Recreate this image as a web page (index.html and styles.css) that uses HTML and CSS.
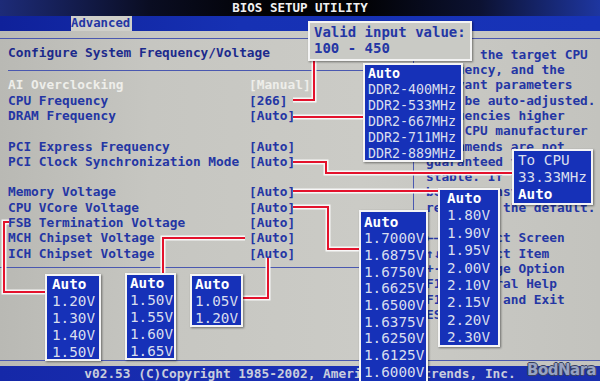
FILE: index.html
```html
<!DOCTYPE html>
<html lang="en">
<head>
<meta charset="utf-8">
<title>BIOS SETUP UTILITY</title>
<link rel="stylesheet" href="styles.css">
</head>
<body>
<div class="screen">
  <header class="title">BIOS SETUP UTILITY</header>
  <nav class="tabs"><span class="tab">Advanced</span></nav>
  <main class="main">
    <section class="left">
      <h1 class="heading">Configure System Frequency/Voltage</h1>
      <div class="rows">
        <div class="row dim"><span>AI Overclocking</span><span>[Manual]</span></div>
        <div class="row"><span>CPU Frequency</span><span>[266]</span></div>
        <div class="row"><span>DRAM Frequency</span><span>[Auto]</span></div>
        <div class="row"></div>
        <div class="row"><span>PCI Express Frequency</span><span>[Auto]</span></div>
        <div class="row"><span>PCI Clock Synchronization Mode</span><span>[Auto]</span></div>
        <div class="row"></div>
        <div class="row"><span>Memory Voltage</span><span>[Auto]</span></div>
        <div class="row"><span>CPU VCore Voltage</span><span>[Auto]</span></div>
        <div class="row"><span>FSB Termination Voltage</span><span>[Auto]</span></div>
        <div class="row"><span>MCH Chipset Voltage</span><span>[Auto]</span></div>
        <div class="row"><span>ICH Chipset Voltage</span><span>[Auto]</span></div>
      </div>
      <div class="sep"></div>
    </section>
    <aside class="help">
      <div class="hl">Select the target CPU</div>
      <div class="hl">frequency, and the</div>
      <div class="hl">relevant parameters</div>
      <div class="hl">will be auto-adjusted.</div>
      <div class="hl">Frequencies higher</div>
      <div class="hl">than CPU manufacturer</div>
      <div class="hl">recommends are not</div>
      <div class="hl">guaranteed to be</div>
      <div class="hl">stable. If the system</div>
      <div class="hl">becomes unstable,</div>
      <div class="hl">return to the default.</div>
      <div class="hl"> </div>
      <div class="hl">←→   Select Screen</div>
      <div class="hl">↑↓   Select Item</div>
      <div class="hl">+-   Change Option</div>
      <div class="hl">F1   General Help</div>
      <div class="hl">F10  Save and Exit</div>
      <div class="hl">ESC  Exit</div>
    </aside>
  </main>
  <footer class="footer">v02.53 (C)Copyright 1985-2002, American Megatrends, Inc.</footer>

  <svg class="wires" width="600" height="381" viewBox="0 0 600 381">
    <g class="halo">
      <polyline points="293,100 314,100 314,61"/>
      <polyline points="293,117 363,117"/>
      <polyline points="293,162 326,162 326,173 512,173"/>
      <polyline points="293,191 438,191"/>
      <polyline points="293,207 328,207 328,249 359,249"/>
      <polyline points="9,222 4,222 4,292 45,292"/>
      <polyline points="245,238 163,238 163,273"/>
      <polyline points="268,258 268,298 243,298"/>
    </g>
    <g class="core">
      <polyline points="293,100 314,100 314,61"/>
      <polyline points="293,117 363,117"/>
      <polyline points="293,162 326,162 326,173 512,173"/>
      <polyline points="293,191 438,191"/>
      <polyline points="293,207 328,207 328,249 359,249"/>
      <polyline points="9,222 4,222 4,292 45,292"/>
      <polyline points="245,238 163,238 163,273"/>
      <polyline points="268,258 268,298 243,298"/>
    </g>
  </svg>

  <div class="pop valid">
    <div class="ln">Valid input value:</div>
    <div class="ln">100 - 450</div>
  </div>
  <div class="pop ddr">
    <div class="ln hd">Auto</div>
    <div class="ln">DDR2-400MHz</div>
    <div class="ln">DDR2-533MHz</div>
    <div class="ln">DDR2-667MHz</div>
    <div class="ln">DDR2-711MHz</div>
    <div class="ln">DDR2-889MHz</div>
  </div>
  <div class="pop tocpu">
    <div class="ln">To CPU</div>
    <div class="ln">33.33MHz</div>
    <div class="ln hd">Auto</div>
  </div>
  <div class="pop mem">
    <div class="ln hd">Auto</div>
    <div class="ln">1.80V</div>
    <div class="ln">1.90V</div>
    <div class="ln">1.95V</div>
    <div class="ln">2.00V</div>
    <div class="ln">2.10V</div>
    <div class="ln">2.15V</div>
    <div class="ln">2.20V</div>
    <div class="ln">2.30V</div>
  </div>
  <div class="pop vcore">
    <div class="ln hd">Auto</div>
    <div class="ln">1.7000V</div>
    <div class="ln">1.6875V</div>
    <div class="ln">1.6750V</div>
    <div class="ln">1.6625V</div>
    <div class="ln">1.6500V</div>
    <div class="ln">1.6375V</div>
    <div class="ln">1.6250V</div>
    <div class="ln">1.6125V</div>
    <div class="ln">1.6000V</div>
  </div>
  <div class="pop fsb">
    <div class="ln hd">Auto</div>
    <div class="ln">1.20V</div>
    <div class="ln">1.30V</div>
    <div class="ln">1.40V</div>
    <div class="ln">1.50V</div>
  </div>
  <div class="pop mch">
    <div class="ln hd">Auto</div>
    <div class="ln">1.50V</div>
    <div class="ln">1.55V</div>
    <div class="ln">1.60V</div>
    <div class="ln">1.65V</div>
  </div>
  <div class="pop ich">
    <div class="ln hd">Auto</div>
    <div class="ln">1.05V</div>
    <div class="ln">1.20V</div>
  </div>

  <div class="mark">BodNara</div>
</div>
</body>
</html>
```

FILE: styles.css
```css
* { box-sizing: border-box; margin: 0; padding: 0; }

html, body {
  width: 600px;
  height: 381px;
  overflow: hidden;
  background: #000;
}

body {
  font-family: "DejaVu Sans Mono", "Liberation Mono", monospace;
}

.screen {
  position: relative;
  width: 600px;
  height: 381px;
  display: flex;
  flex-direction: column;
  overflow: hidden;
  background: linear-gradient(to right, #b9b9b4 0%, #c6c6c1 25%, #cbcbc6 60%, #c3c3be 100%);
}

/* ---------- title bar ---------- */
.title {
  height: 16px;
  flex: none;
  background: linear-gradient(to right, #1d2b78 0%, #0a0d22 25%, #020204 45%, #020204 60%, #0c1232 80%, #1e36a0 100%);
  color: #f0f0f0;
  font-size: 12.5px;
  font-weight: bold;
  line-height: 16px;
  text-align: center;
}

/* ---------- tab bar ---------- */
.tabs {
  height: 15px;
  flex: none;
  display: flex;
  padding-left: 71px;
  background: linear-gradient(to right, #0f219a 0%, #1631b4 40%, #1733b8 100%);
}

.tab {
  width: 61px;
  background: #cfcfca;
  color: #2436a4;
  font-size: 12.3px;
  font-weight: bold;
  line-height: 15px;
}

/* ---------- main area ---------- */
.main {
  flex: 1;
  display: flex;
  padding: 7px 0 5px;
  color: #2436a4;
  font-size: 12.8px;
  font-weight: bold;
}

.left {
  width: 413px;
  flex: none;
  padding-left: 8px;
  border-top: 1px solid #4a58b0;
  border-bottom: 1px solid #4a58b0;
}

.heading {
  font-size: 12.8px;
  font-weight: bold;
  color: #1c2a8c;
  line-height: 15.3px;
  padding: 6px 0 9.7px;
  margin-right: 6px;
  border-bottom: 1px solid #4a58b0;
}

.rows {
  padding-top: 6.35px;
}

.row {
  height: 15.3px;
  line-height: 15.3px;
  display: grid;
  grid-template-columns: 241px auto;
  white-space: pre;
}

.row.dim {
  color: #eeeeea;
}

.sep {
  margin-top: 6px;
  margin-left: -8px;
  border-top: 1px solid #4a58b0;
}

.help {
  flex: 1;
  padding: 7.75px 0 0 12px;
  border-top: 1px solid #4a58b0;
  border-bottom: 1px solid #4a58b0;
  border-left: 1px solid #4a58b0;
}

.hl {
  height: 15.3px;
  line-height: 15.3px;
  white-space: pre;
}

/* ---------- footer ---------- */
.footer {
  height: 15px;
  flex: none;
  background: linear-gradient(to right, #1528a8 0%, #1a30b6 50%, #1a2fae 100%);
  color: #c9cddd;
  font-size: 12.8px;
  font-weight: bold;
  line-height: 14px;
  padding-top: 1px;
  text-align: center;
  white-space: pre;
}

/* ---------- connector wires ---------- */
.wires {
  position: absolute;
  left: 0;
  top: 0;
  pointer-events: none;
}

.wires polyline {
  fill: none;
  stroke-linejoin: miter;
  stroke-linecap: butt;
}

.halo polyline {
  stroke: #f7f7f7;
  stroke-width: 5;
}

.core polyline {
  stroke: #e3122c;
  stroke-width: 2;
}

/* ---------- popup boxes ---------- */
.pop {
  position: absolute;
  background: #1631b8;
  border: 2px solid #f4f4f4;
  box-shadow: 1px 1px 2px rgba(0, 0, 0, 0.45);
  color: #d9deee;
  font-size: 14.3px;
  line-height: 17px;
  overflow: hidden;
}

.pop .ln {
  white-space: pre;
}

.pop .hd {
  color: #ffffff;
  font-weight: bold;
}

.valid {
  left: 308px;
  top: 21px;
  width: 164px;
  height: 40px;
  background: #c9cac5;
  color: #2436a4;
  font-size: 14px;
  font-weight: bold;
  line-height: 16px;
  padding: 1px 0 0 4px;
}

.ddr {
  left: 363px;
  top: 63px;
  width: 100px;
  height: 99px;
  font-size: 13.3px;
  line-height: 16px;
  padding: 1px 0 0 3px;
}

.tocpu {
  left: 512px;
  top: 149px;
  width: 81px;
  height: 56px;
  padding: 0.5px 0 0 4px;
}

.mem {
  left: 438px;
  top: 188px;
  width: 62px;
  height: 159px;
  line-height: 17.4px;
  padding: 0 0 0 7px;
}

.vcore {
  left: 359px;
  top: 210px;
  width: 69px;
  height: 180px;
  line-height: 16.67px;
  padding: 1.7px 0 0 3px;
}

.fsb {
  left: 45px;
  top: 274px;
  width: 56px;
  height: 87px;
  padding: 0 0 0 5px;
}

.mch {
  left: 125px;
  top: 273px;
  width: 51px;
  height: 87px;
  padding: 0 0 0 3px;
}

.ich {
  left: 190px;
  top: 274px;
  width: 53px;
  height: 53px;
  padding: 0 0 0 3px;
}

/* ---------- watermark ---------- */
.mark {
  position: absolute;
  left: 527px;
  top: 361px;
  font-family: "DejaVu Sans", sans-serif;
  font-size: 15px;
  font-weight: bold;
  letter-spacing: -0.5px;
  line-height: 18px;
  color: #98a2c2;
  text-shadow: -1px 0 #3a4260, 1px 0 #3a4260, 0 -1px #3a4260, 0 1px #3a4260;
}
```
